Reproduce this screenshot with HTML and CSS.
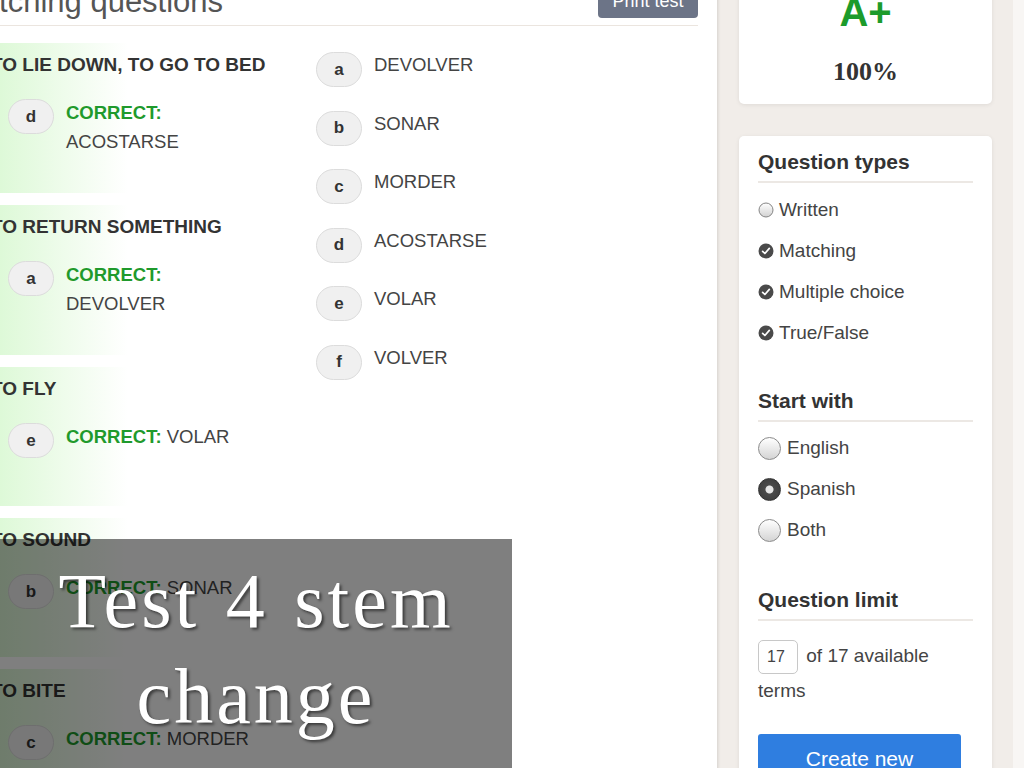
FILE: index.html
```html
<!DOCTYPE html>
<html lang="en">
<head>
    <meta charset="UTF-8">
    <meta name="viewport" content="width=device-width, initial-scale=1.0">
    <title>Test 4 stem change</title>
    <link rel="stylesheet" href="styles.css">
</head>
<body>

    <div class="page">
        <main class="test-panel">
            <div class="test-header">
                <h2>Matching questions</h2>
                <button class="print-btn">Print test</button>
            </div>

            <div class="quiz">
                <div class="terms">
                    <div class="q-block">
                        <div class="q-term">TO LIE DOWN, TO GO TO BED</div>
                        <div class="q-answer">
                            <span class="letter">d</span>
                            <span class="answer-text"><b class="correct">CORRECT:</b> ACOSTARSE</span>
                        </div>
                    </div>
                    <div class="q-block">
                        <div class="q-term">TO RETURN SOMETHING</div>
                        <div class="q-answer">
                            <span class="letter">a</span>
                            <span class="answer-text"><b class="correct">CORRECT:</b> DEVOLVER</span>
                        </div>
                    </div>
                    <div class="q-block">
                        <div class="q-term">TO FLY</div>
                        <div class="q-answer">
                            <span class="letter">e</span>
                            <span class="answer-text"><b class="correct">CORRECT:</b> VOLAR</span>
                        </div>
                    </div>
                    <div class="q-block">
                        <div class="q-term">TO SOUND</div>
                        <div class="q-answer">
                            <span class="letter">b</span>
                            <span class="answer-text"><b class="correct">CORRECT:</b> SONAR</span>
                        </div>
                    </div>
                    <div class="q-block">
                        <div class="q-term">TO BITE</div>
                        <div class="q-answer">
                            <span class="letter">c</span>
                            <span class="answer-text"><b class="correct">CORRECT:</b> MORDER</span>
                        </div>
                    </div>
                    <div class="q-block">
                        <div class="q-term">TO RETURN</div>
                        <div class="q-answer">
                            <span class="letter">f</span>
                            <span class="answer-text"><b class="correct">CORRECT:</b> VOLVER</span>
                        </div>
                    </div>
                </div>

                <ul class="choices">
                    <li class="choice"><span class="letter">a</span><span>DEVOLVER</span></li>
                    <li class="choice"><span class="letter">b</span><span>SONAR</span></li>
                    <li class="choice"><span class="letter">c</span><span>MORDER</span></li>
                    <li class="choice"><span class="letter">d</span><span>ACOSTARSE</span></li>
                    <li class="choice"><span class="letter">e</span><span>VOLAR</span></li>
                    <li class="choice"><span class="letter">f</span><span>VOLVER</span></li>
                </ul>
            </div>
        </main>

        <aside class="sidebar">
            <div class="card score-card">
                <div class="grade">A+</div>
                <div class="percent">100%</div>
            </div>

            <div class="card options-card">
                <h3>Question types</h3>
                <ul class="opt-list">
                    <li>
                        <svg class="check" width="16" height="16" viewBox="0 0 16 16">
                            <defs>
                                <linearGradient id="offGrad" x1="0" y1="0" x2="0" y2="1">
                                    <stop offset="0" stop-color="#ffffff"/>
                                    <stop offset="1" stop-color="#d2d2d2"/>
                                </linearGradient>
                            </defs>
                            <circle cx="8" cy="8" r="7" fill="url(#offGrad)" stroke="#858585" stroke-width="1"/>
                        </svg>
                        Written
                    </li>
                    <li>
                        <svg class="check" width="16" height="16" viewBox="0 0 16 16">
                            <circle cx="8" cy="8" r="7.5" fill="#4a4a4a"/>
                            <path d="M4.6 8.3 L6.9 10.5 L11.3 5.4" fill="none" stroke="#fff" stroke-width="1.7" stroke-linecap="round" stroke-linejoin="round"/>
                        </svg>
                        Matching
                    </li>
                    <li>
                        <svg class="check" width="16" height="16" viewBox="0 0 16 16">
                            <circle cx="8" cy="8" r="7.5" fill="#4a4a4a"/>
                            <path d="M4.6 8.3 L6.9 10.5 L11.3 5.4" fill="none" stroke="#fff" stroke-width="1.7" stroke-linecap="round" stroke-linejoin="round"/>
                        </svg>
                        Multiple choice
                    </li>
                    <li>
                        <svg class="check" width="16" height="16" viewBox="0 0 16 16">
                            <circle cx="8" cy="8" r="7.5" fill="#4a4a4a"/>
                            <path d="M4.6 8.3 L6.9 10.5 L11.3 5.4" fill="none" stroke="#fff" stroke-width="1.7" stroke-linecap="round" stroke-linejoin="round"/>
                        </svg>
                        True/False
                    </li>
                </ul>

                <h3>Start with</h3>
                <ul class="opt-list radios">
                    <li><span class="radio"></span>English</li>
                    <li><span class="radio checked"></span>Spanish</li>
                    <li><span class="radio"></span>Both</li>
                </ul>

                <h3>Question limit</h3>
                <p class="limit"><span class="limit-input">17</span> of 17 available terms</p>

                <button class="create-btn">Create new</button>
            </div>
        </aside>

        <div class="edge"></div>
    </div>

    <div class="caption">Test 4 stem<br>change</div>

</body>
</html>
```

FILE: styles.css
```css
html, body {
    overflow: hidden;
}

body {
    margin: 0;
    height: 768px;
    background-color: #f1ede9; /* warm beige page */
    font-family: "Liberation Sans", Arial, sans-serif;
    color: #333;
}

.page {
    display: flex;
    align-items: flex-start;
    margin: -16px 0 0 -44px; /* page is scrolled a bit */
}

/* ---- main test panel ---- */
.test-panel {
    width: 742px;
    min-height: 900px;
    padding-right: 19px;
    background-color: #fff;
    box-shadow: 1px 0 3px rgba(0, 0, 0, 0.12);
}

.test-header {
    display: flex;
    justify-content: space-between;
    align-items: flex-end;
    padding-bottom: 5px;
    border-bottom: 1px solid #ebe5df;
}

.test-header h2 {
    margin: 0;
    font-size: 31px;
    font-weight: normal;
    line-height: 36px;
    color: #555;
}

.print-btn {
    height: 34px;
    width: 100px;
    margin-bottom: 2px;
    border: none;
    border-radius: 4px;
    background-color: #6c7487;
    color: #fff;
    font-family: inherit;
    font-size: 18px;
}

.quiz {
    display: flex;
    margin-top: 17px;
}

.terms {
    width: 360px;
    flex-shrink: 0;
}

.q-block {
    padding: 12px 0 37px 39px;
    margin-bottom: 12px;
    background: linear-gradient(to right, #d2f7ca 0, #effcec 110px, #fff 172px);
}

.q-term {
    margin-left: -4px;
    font-size: 19px;
    font-weight: bold;
    line-height: 20px;
    color: #333;
}

.q-answer {
    display: flex;
    align-items: flex-start;
    min-height: 47px;
    margin-top: 23px;
}

.letter {
    flex-shrink: 0;
    display: inline-flex;
    justify-content: center;
    align-items: center;
    width: 44px;
    height: 33px;
    border: 1px solid #dcdcdc;
    border-radius: 18px;
    background-color: #f0f0f0;
    font-size: 17px;
    font-weight: bold;
    color: #333;
}

.q-answer .letter {
    margin: 1px 12px 0 13px;
}

.answer-text {
    width: 195px;
    font-size: 18.5px;
    line-height: 29px;
    color: #444;
}

.correct {
    color: #1f9a2c;
}

.choices {
    list-style: none;
    margin: 0;
    padding: 8px 0 0 0;
}

.choice {
    display: flex;
    align-items: flex-start;
    margin-bottom: 22.5px;
    font-size: 18.5px;
    line-height: 28px;
    color: #444;
}

.choice .letter {
    margin: 1px 12px 0 0;
}

/* ---- sidebar ---- */
.sidebar {
    width: 253px;
    margin-left: 22px;
    flex-shrink: 0;
}

.card {
    background-color: #fff;
    border-radius: 5px;
    box-shadow: 0 1px 4px rgba(0, 0, 0, 0.08);
}

.score-card {
    padding: 10px 0 16px;
    text-align: center;
}

.grade {
    font-size: 40px;
    font-weight: bold;
    line-height: 44px;
    color: #1c9b2b;
    margin-top: -4px;
}

.percent {
    margin-top: 22px;
    font-family: "Liberation Serif", "Times New Roman", serif;
    font-size: 26px;
    font-weight: bold;
    line-height: 32px;
    color: #333;
}

.options-card {
    margin-top: 32px;
    padding: 13px 19px 40px;
}

.options-card h3 {
    margin: 0;
    padding-bottom: 6px;
    border-bottom: 2px solid #ece8e4;
    font-size: 21px;
    line-height: 26px;
    color: #333;
}

.opt-list {
    list-style: none;
    margin: 15px 0 43px;
    padding: 0;
}

.opt-list li {
    display: flex;
    align-items: center;
    height: 24px;
    margin-bottom: 17px;
    font-size: 19px;
    color: #444;
}

.opt-list li:last-child {
    margin-bottom: 0;
}

.radios {
    margin-top: 14px;
    margin-bottom: 45px;
}

.check {
    margin-right: 5px;
    flex-shrink: 0;
}

.radio {
    width: 21px;
    height: 21px;
    margin-right: 6px;
    border: 1px solid #8a8a8a;
    border-radius: 50%;
    background: linear-gradient(#ffffff, #d4d4d4);
    flex-shrink: 0;
}

.radio.checked {
    border-color: #333;
    background: radial-gradient(circle, #e6e6e6 0, #e6e6e6 3.5px, #4a4a4a 4.5px, #3a3a3a 100%);
}

.limit {
    margin: 18px 0 0;
    font-size: 19px;
    line-height: 33px;
    color: #444;
}

.limit-input {
    display: inline-block;
    box-sizing: border-box;
    width: 40px;
    height: 34px;
    padding-left: 8px;
    margin-right: 3px;
    border: 1px solid #c8c8c8;
    border-radius: 5px;
    font-size: 16px;
    line-height: 32px;
    vertical-align: middle;
}

.create-btn {
    display: block;
    width: 203px;
    height: 50px;
    margin-top: 27px;
    border: none;
    border-radius: 3px;
    background-color: #2f7ee0;
    color: #fff;
    font-family: inherit;
    font-size: 21px;
}

.edge {
    width: 11px;
    height: 800px;
    margin-left: 21px;
    background-color: #f8f6f4;
}

/* ---- slide caption over the page ---- */
.caption {
    position: absolute;
    left: 0;
    top: 539px;
    width: 512px;
    height: 229px;
    box-sizing: border-box;
    padding-top: 14px;
    background-color: rgba(0, 0, 0, 0.5);
    text-align: center;
    font-family: "Liberation Serif", "Times New Roman", serif;
    font-size: 78px;
    line-height: 96px;
    letter-spacing: 3px;
    word-spacing: 4px;
    color: #fff;
    text-shadow: 2px 2px 3px rgba(0, 0, 0, 0.55);
}
```
